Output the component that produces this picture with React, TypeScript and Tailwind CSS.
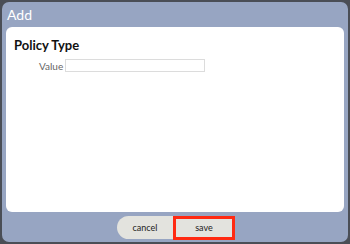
import React, { useState } from 'react';

export default function App() {
  const [value, setValue] = useState('');

  return (
    <div className="w-[350px] h-[244px] bg-[#4a4e56] p-[2px]" style={{ fontFamily: 'Lato, "Open Sans", sans-serif' }}>
      <div className="h-full bg-[#97a5c2] rounded-[7px] flex flex-col px-[4px]">
        <div className="h-[25px] flex items-center pl-[1px] text-white text-[14px] leading-none">Add</div>
        <div className="flex-1 bg-white rounded-[6px] px-[8px] pt-[12px]">
          <h2 className="text-[13px] font-bold text-[#111] leading-none">Policy Type</h2>
          <div className="flex items-center mt-[7px] pl-[25px] gap-[3px]">
            <label className="text-[10px] text-[#666] w-[23px] text-right leading-none">Value</label>
            <input
              value={value}
              onChange={e => setValue(e.target.value)}
              className="w-[140px] h-[13px] border border-[#dcdcdc] outline-none text-[10px] px-1"
            />
          </div>
        </div>
        <div className="h-[30px] flex items-center justify-center pt-[1px]">
          <div className="flex items-center pl-[2px]">
            <button className="w-[56px] h-[23px] bg-[#e3e3de] rounded-l-[12px] text-[9px] text-[#222] leading-none">cancel</button>
            <button className="w-[62px] h-[24px] bg-[#e3e3de] border-[3px] border-[#ff2a12] text-[9px] text-[#222] leading-none">save</button>
          </div>
        </div>
      </div>
    </div>
  );
}
